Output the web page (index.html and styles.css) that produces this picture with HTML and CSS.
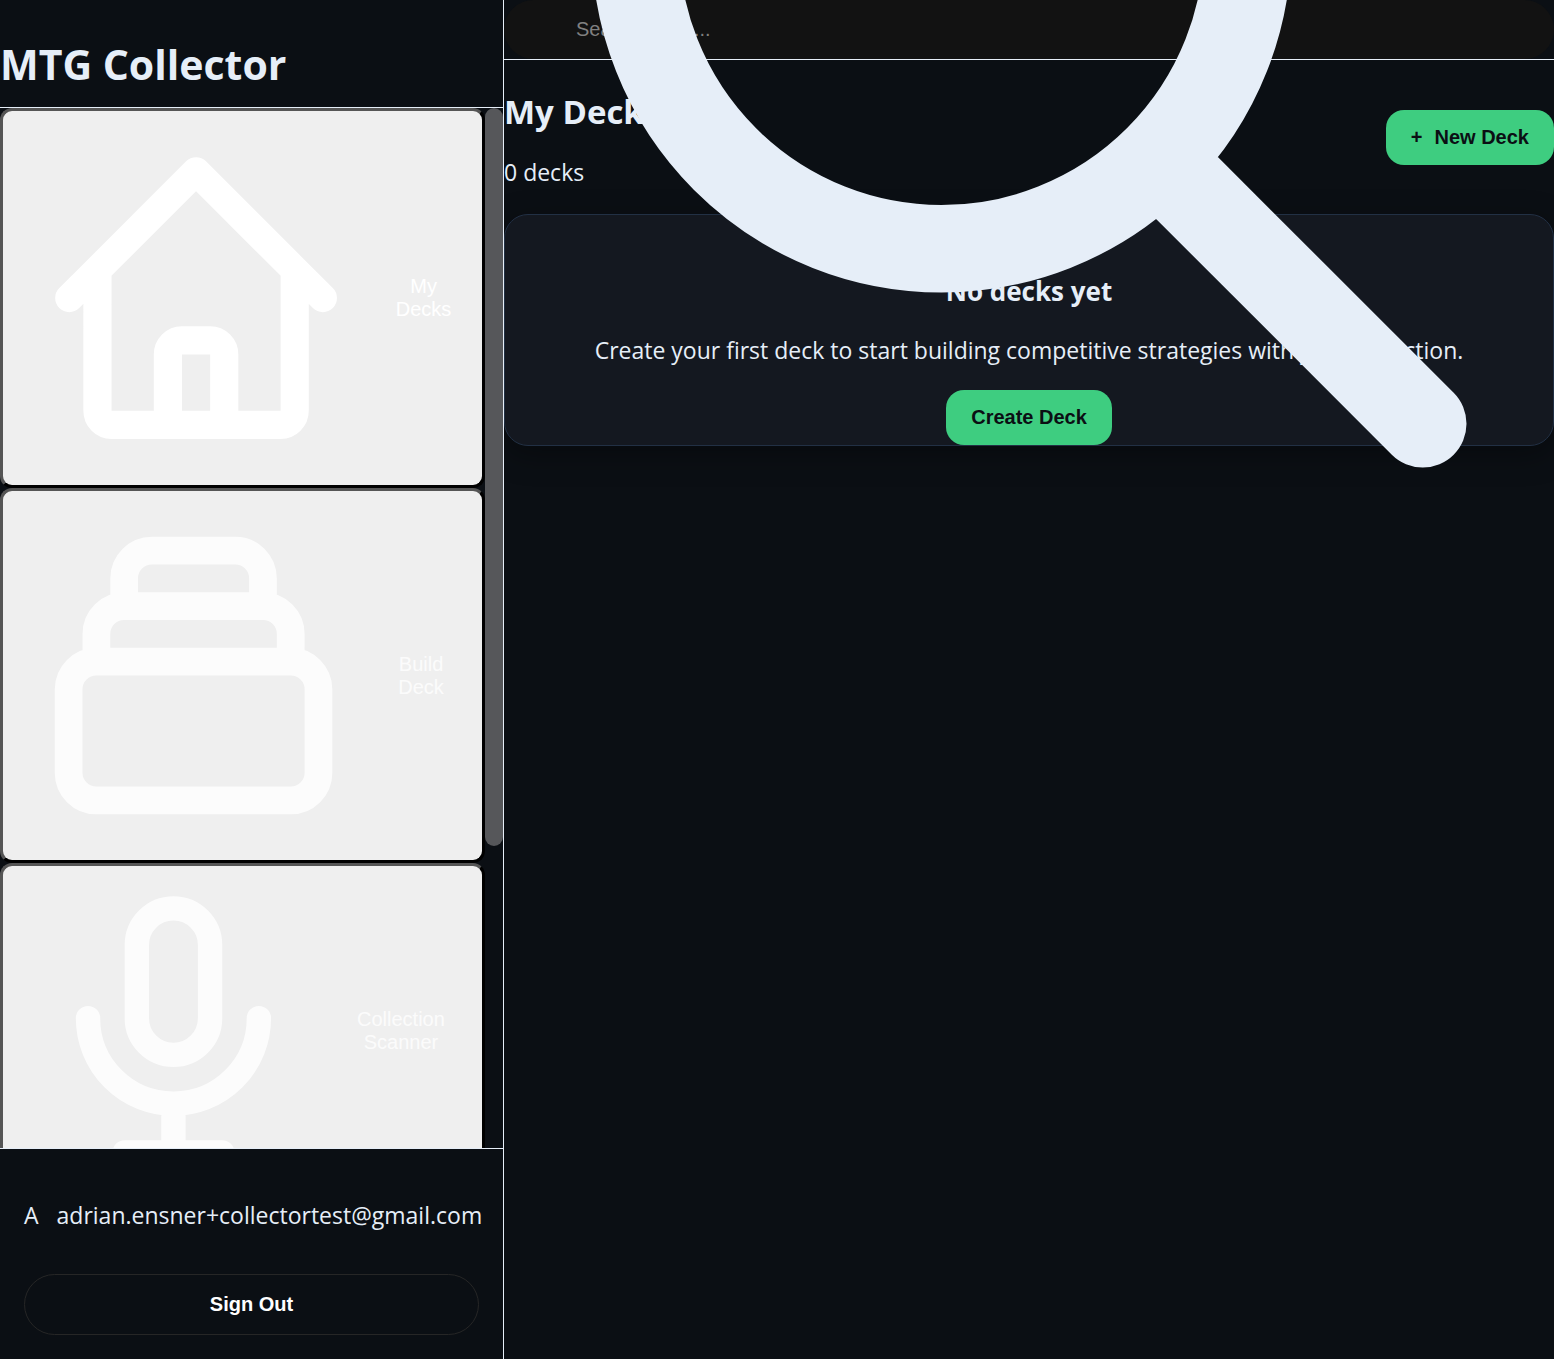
FILE: index.html
```html
<!DOCTYPE html>
<html lang="en">
<head>
<meta charset="utf-8">
<title>MTG Collector</title>
<link rel="stylesheet" href="styles.css">
</head>
<body>
<div class="app">
  <aside class="sidebar">
    <header class="brand"><h1>MTG Collector</h1></header>
    <div class="nav-area">
      <nav class="nav" aria-label="Main">
        <button class="nav-item active" type="button">
          <svg viewBox="0 0 24 24" aria-hidden="true"><path d="M3 12l2-2m0 0l7-7 7 7M5 10v10a1 1 0 001 1h3m10-11l2 2m-2-2v10a1 1 0 01-1 1h-3m-6 0a1 1 0 001-1v-4a1 1 0 011-1h2a1 1 0 011 1v4a1 1 0 001 1m-6 0h6"/></svg>
          <span>My Decks</span>
        </button>
        <button class="nav-item" type="button">
          <svg viewBox="0 0 24 24" aria-hidden="true"><path d="M19 11H5m14 0a2 2 0 012 2v6a2 2 0 01-2 2H5a2 2 0 01-2-2v-6a2 2 0 012-2m14 0V9a2 2 0 00-2-2M5 11V9a2 2 0 012-2m0 0V5a2 2 0 012-2h6a2 2 0 012 2v2M7 7h10"/></svg>
          <span>Build Deck</span>
        </button>
        <button class="nav-item" type="button">
          <svg viewBox="0 0 24 24" aria-hidden="true"><path d="M19 11a7 7 0 01-7 7m0 0a7 7 0 01-7-7m7 7v4m0 0H8m4 0h4m-4-8a3 3 0 01-3-3V5a3 3 0 116 0v6a3 3 0 01-3 3z"/></svg>
          <span>Collection Scanner</span>
        </button>
      </nav>
      <div class="scroll-track" aria-hidden="true"><div class="scroll-thumb"></div></div>
    </div>
    <footer class="account">
      <div class="user"><span>A</span><span>adrian.ensner+collectortest@gmail.com</span></div>
      <button class="sign-out" type="button">Sign Out</button>
    </footer>
  </aside>
  <main class="main">
    <div class="search">
      <input type="text" aria-label="Search cards" placeholder="Search cards...">
      <svg class="search-icon" viewBox="0 0 24 24" aria-hidden="true"><path d="M21 21l-6-6m2-5a7 7 0 11-14 0 7 7 0 0114 0z"/></svg>
    </div>
    <section>
      <div class="section-head">
        <div>
          <h2>My Decks</h2>
          <p>0 decks</p>
        </div>
        <button class="primary" type="button"><span>+</span><span>New Deck</span></button>
      </div>
      <div class="empty">
        <h3>No decks yet</h3>
        <p>Create your first deck to start building competitive strategies with your collection.</p>
        <button class="primary" type="button">Create Deck</button>
      </div>
    </section>
  </main>
</div>
</body>
</html>
```
FILE: styles.css
```css
* { box-sizing: border-box; }

body {
  margin: 0;
  background: #0b0f14;
  color: #e6eef8;
  font: 23px/32px "Segoe UI", "Open Sans", "Noto Sans", sans-serif;
}

h1, h2, h3, p { margin: 0; }

button, input { font: 20px/23px "Liberation Sans", Arial, sans-serif; }

svg {
  fill: none;
  stroke: currentColor;
  stroke-width: 2;
  stroke-linecap: round;
  stroke-linejoin: round;
}

.app {
  display: flex;
  height: 100vh;
  overflow: hidden;
}

.sidebar {
  display: flex;
  flex: 0 0 504px;
  flex-direction: column;
  min-width: 0;
  border-right: 1px solid #e6eef8;
}

.brand {
  padding: 36px 0 15px;
  border-bottom: 1px solid #e6eef8;
}

.brand h1 { font-size: 41px; line-height: 56px; }

.nav-area {
  display: flex;
  flex: 1;
  min-height: 0;
}

.nav {
  flex: 1;
  min-width: 0;
  overflow: hidden;
}

.scroll-track { flex: 0 0 18px; }

.scroll-thumb {
  height: 71%;
  border-radius: 9px;
  background: #56575a;
}

.nav-item {
  display: flex;
  align-items: center;
  gap: 24px;
  width: 100%;
  padding: 18px 24px;
  border: 3px solid;
  border-color: #555 #000 #000 #555;
  border-radius: 12px;
  background: #efefef;
  color: rgba(255, 255, 255, 0.8);
}

.nav-item.active { color: #fff; }
.nav-item svg { width: 100%; min-width: 0; }

.account {
  padding: 24px;
  border-top: 1px solid #e6eef8;
}

.user {
  display: flex;
  gap: 18px;
  padding: 26px 0 43px;
}

.sign-out {
  display: block;
  width: 100%;
  padding: 18px 24px;
  border: 1px solid #262626;
  border-radius: 32px;
  background: transparent;
  color: #fff;
  font-weight: 700;
}

.main {
  flex: 1;
  min-width: 0;
  overflow: hidden;
}

.search {
  position: relative;
  border-bottom: 1px solid #e6eef8;
}

.search input {
  display: block;
  width: 100%;
  padding: 18px 24px 18px 72px;
  border: 0;
  border-radius: 32px;
  background: #121212;
  color: #fff;
}

.search input::placeholder { color: #808080; opacity: 1; }

.search-icon {
  position: absolute;
  top: 50%;
  left: 0;
  z-index: 1;
  width: 100%;
  transform: translateY(-50%);
  pointer-events: none;
}

.section-head {
  display: flex;
  align-items: center;
  justify-content: space-between;
  padding: 26px 0;
}

.section-head h2 { margin-bottom: 18px; font-size: 33px; line-height: 52px; }

.primary {
  display: inline-flex;
  gap: 12px;
  padding: 16px 25px;
  border: 0;
  border-radius: 18px;
  background: #3ecd80;
  color: #0b0f14;
  font-weight: 700;
}

.empty {
  display: flex;
  flex-direction: column;
  align-items: center;
  padding-top: 60px;
  border: 1px solid #223044;
  border-radius: 24px;
  background: #141820;
  box-shadow: 0 8px 30px rgba(0, 0, 0, 0.35);
  text-align: center;
}

.empty h3 { margin-bottom: 27px; font-size: 26px; }
.empty p { margin-bottom: 24px; }
```
